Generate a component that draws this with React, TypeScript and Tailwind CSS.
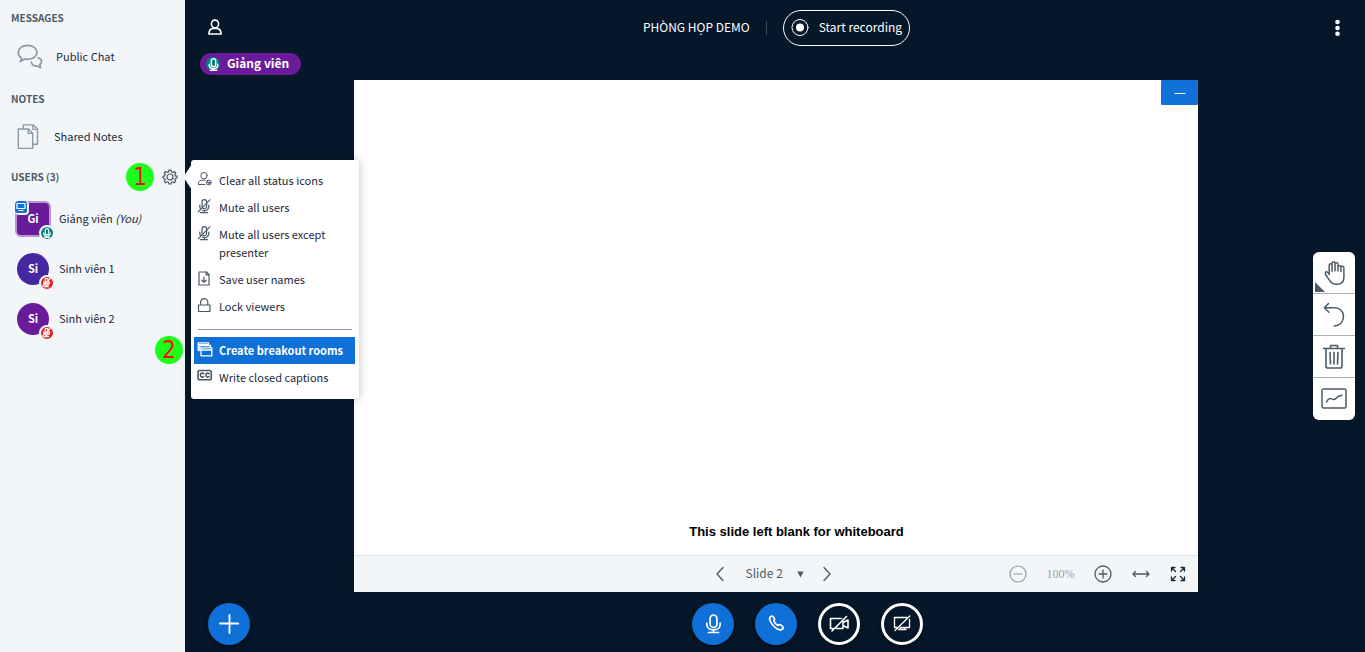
import type { ReactNode } from "react";

type IconProps = { className?: string };

function Svg({ w, h, sw = 1, className = "", children }: { w: number; h: number; sw?: number; className?: string; children: ReactNode }) {
  return (
    <svg
      aria-hidden="true"
      width={w}
      height={h}
      viewBox={`0 0 ${w} ${h}`}
      fill="none"
      stroke="currentColor"
      strokeWidth={sw}
      strokeLinecap="round"
      strokeLinejoin="round"
      className={`shrink-0 ${className}`}
    >
      {children}
    </svg>
  );
}

const ChatIcon = () => (
  <Svg w={26} h={26} sw={1.7}>
    <path d="M4.500 14.200C2.400 12.800 1.200 10.900 1.200 8.500 1.200 4.300 5.400 1.400 10.600 1.400S20 4.300 20 8.300s-4.200 7-9.400 7c-1 0-2-.1-2.900-.4L3.200 17.600z" />
    <path d="M21.200 13.700c2 .6 3.300 1.900 3.300 3.700 0 1.300-.7 2.300-1.700 3.100l.7 3.200-3-1.700c-3 .6-6.100-1.200-6.100-4" />
  </Svg>
);

const NotesIcon = () => (
  <Svg w={22} h={26} sw={1.4}>
    <path d="M1.300 5h10.200l4.200 4.200v15.200H1.300z" />
    <path d="M11.300 5.200v4.200h4.200" />
    <path d="M6.200 4.700V.9h10l4.300 4.200v15.200h-4.500" />
    <path d="M15.900 1.200v4.200h4.200" />
  </Svg>
);

const GearIcon = () => (
  <Svg w={16} h={16} sw={1.2}>
    <circle cx="8" cy="8" r="3" />
    <path d="M6.900 1.200h2.200l.4 1.800 1.200.5 1.600-1 1.500 1.500-1 1.600.5 1.300 1.700.3v1.800l-1.700.4-.5 1.300 1 1.500-1.500 1.600-1.600-1-1.200.5-.4 1.700H6.900l-.4-1.700-1.200-.5-1.600 1-1.500-1.600 1-1.500-.5-1.300L1 9V7.200l1.700-.3.5-1.300-1-1.600 1.500-1.500 1.600 1 1.200-.5z" />
  </Svg>
);

const ClearStatusIcon = () => (
  <Svg w={16} h={16}>
    <circle cx="7" cy="3.700" r="3.200" />
    <path d="M8 12.500H1.200c0-2.600 1.600-4.300 4-4.300h3" />
    <circle cx="11.800" cy="10.500" r="2.400" />
    <path d="M10.500 10.500l1 1 1.700-1.800M10.500 9.400l2.600 2.400" />
  </Svg>
);

const MutedMicIcon = ({ size = 16, sw = 1.2, className = "" }: { size?: number; sw?: number } & IconProps) => (
  <svg aria-hidden="true" width={size} height={size} viewBox="0 0 16 16" fill="none" stroke="currentColor" strokeWidth={sw} strokeLinecap="round" strokeLinejoin="round" className={`shrink-0 ${className}`}>
    <path d="M5 7.800V3a2.300 2.300 0 0 1 4.600 0V7.300a2.300 2.300 0 0 1-3.800 1.900" />
    <path d="M2.800 6.200v1.400c0 1 .3 1.800.9 2.400M5.600 11.200c3 1.100 6.200-.6 6.200-3.700V6.200M7.300 11.500v2M3.500 13.700h7M1.200 12.800L12.900.8" />
  </svg>
);

const MicIcon = ({ size = 16, sw = 1.2, className = "" }: { size?: number; sw?: number } & IconProps) => (
  <svg aria-hidden="true" width={size} height={size} viewBox="0 0 20 20" fill="none" stroke="currentColor" strokeWidth={sw} strokeLinecap="round" strokeLinejoin="round" className={`shrink-0 ${className}`}>
    <rect x="6.600" y="1.200" width="6.800" height="12.300" rx="3.400" />
    <path d="M3.500 9.500v1.200c0 3.400 2.900 5.600 6.500 5.600s6.500-2.200 6.500-5.600V9.500M10 16.300v2.600M5 18.900h10" />
  </svg>
);

const SaveIcon = () => (
  <Svg w={16} h={16} sw={1.2}>
    <path d="M2 1h7.500L12 3.700v10.300H2z" />
    <path d="M9.200 1.200v2.700H12M7 6v5.200M4.800 9.200L7 11.300l2.200-2.100" />
  </Svg>
);

const LockIcon = () => (
  <Svg w={16} h={16} sw={1.2}>
    <path d="M1.500 7h11.500v6.500H1.500zM3.600 6.800V4.300a3.600 3.600 0 0 1 7.200 0v2.500" />
  </Svg>
);

const RoomsIcon = () => (
  <Svg w={16} h={16} sw={1.3}>
    <path d="M1.200 8.500V.8H11.500v1.500M1.200 2.600h10" />
    <path d="M2.800 8.500V3.500h10.700v2" />
    <path d="M4 5.800h10.800v8H4zM4 8h10.800" />
  </Svg>
);

const CaptionsIcon = () => (
  <Svg w={16} h={16} sw={1.600}>
    <rect x="1" y="1.500" width="13.300" height="9.200" rx="1.800" />
    <path d="M6.700 4.700C5.200 3.400 3.400 4.400 3.400 6.100s1.800 2.700 3.300 1.400M12.200 4.700C10.700 3.400 8.900 4.400 8.900 6.100s1.800 2.700 3.300 1.400" />
  </Svg>
);

const badge = "absolute -right-[6px] -bottom-[6px] flex size-4 items-center justify-center rounded-full border-2 border-[#f3f6f9] text-white";

const users = [
  { name: "Giảng viên", you: true, initials: "Gi", avatar: "size-9 rounded-md border-2 border-[#ba93d2] bg-[#6a1b9a]", muted: false },
  { name: "Sinh viên 1", you: false, initials: "Si", avatar: "size-8 rounded-full bg-[#4527a0]", muted: true },
  { name: "Sinh viên 2", you: false, initials: "Si", avatar: "size-8 rounded-full bg-[#6a1b9a]", muted: true },
];

function Marker({ children, className }: { children: ReactNode; className: string }) {
  return (
    <span className={`absolute flex size-7 items-center justify-center rounded-full bg-[#1cff1c] font-['DejaVu_Sans_Condensed','DejaVu_Sans',sans-serif] text-2xl leading-7 text-[#ff0a0a] ${className}`}>
      {children}
    </span>
  );
}

function MenuItem({ icon, children, active = false }: { icon: ReactNode; children: ReactNode; active?: boolean }) {
  const tone = active ? "bg-[#0f70d7] font-bold text-white" : "text-[#1b2a3a]";
  return (
    <li>
      <button type="button" role="menuitem" className={`flex w-full items-start gap-[6px] pt-1 pr-1 pb-[5px] pl-[3px] text-left leading-[18px] ${tone}`}>
        <span className={`pt-px ${active ? "text-white" : "text-[#4e5a66]"}`}>{icon}</span>
        <span>{children}</span>
      </button>
    </li>
  );
}

function UserMenu() {
  return (
    <div className="absolute top-0 left-[191px] z-20 w-[168px] rounded-[3px] bg-white pt-[7px] pr-1 pb-2 pl-[3px] text-[11px] shadow-[0_0_10px_rgba(0,0,0,0.25)]">
      <svg aria-hidden="true" width="8" height="26" viewBox="0 0 8 26" className="absolute top-1 -left-[7px]">
        <path d="M8 0L1 10.500q-1.500 2.500 0 5L8 26z" fill="#fff" />
      </svg>
      <ul role="menu">
        <MenuItem icon={<ClearStatusIcon />}>Clear all status icons</MenuItem>
        <MenuItem icon={<MutedMicIcon />}>Mute all users</MenuItem>
        <MenuItem icon={<MutedMicIcon />}>Mute all users except presenter</MenuItem>
        <MenuItem icon={<SaveIcon />}>Save user names</MenuItem>
        <MenuItem icon={<LockIcon />}>Lock viewers</MenuItem>
        <li role="separator" className="mr-[3px] ml-1 mt-[9px] mb-[7px] h-px bg-[#8b9aa8]" />
        <MenuItem icon={<RoomsIcon />} active>Create breakout rooms</MenuItem>
        <MenuItem icon={<CaptionsIcon />}>Write closed captions</MenuItem>
      </ul>
      <Marker className="top-44 -left-9">2</Marker>
    </div>
  );
}

function Sidebar() {
  return (
    <aside className="w-[185px] shrink-0 bg-[#f3f6f9] text-[11px] text-[#1b2a3a]">
      <h2 className="flex h-9 items-center pb-0.5 pl-[11px] text-[10px] font-bold text-[#4e5a66]">MESSAGES</h2>
      <button type="button" className="flex h-[42px] w-full items-center gap-[13px] pl-[17px]">
        <span className="text-[#8b9aa8]"><ChatIcon /></span>
        <span className="pb-0.5">Public Chat</span>
      </button>
      <h2 className="flex h-[42px] items-center pb-0.5 pl-[11px] text-[10px] font-bold text-[#4e5a66]">NOTES</h2>
      <button type="button" className="flex h-[34px] w-full items-center gap-[15px] pl-[17px]">
        <span className="text-[#8b9aa8]"><NotesIcon /></span>
        <span className="pb-0.5">Shared Notes</span>
      </button>
      <div className="relative mt-1.5 flex h-[34px] w-[185px] items-center justify-between pr-[7px] pl-[11px]">
        <h2 className="pb-0.5 text-[10px] font-bold text-[#4e5a66]">USERS (3)</h2>
        <Marker className="top-[3px] left-[126px]">1</Marker>
        <button type="button" aria-label="Manage users" className="text-[#4e5a66]"><GearIcon /></button>
        <UserMenu />
      </div>
      <ul>
        {users.map((u) => (
          <li key={u.name} className="flex h-[50px] items-center gap-2 pl-[15px]">
            <div className="flex w-9 shrink-0 justify-center">
              <div className={`relative flex items-center justify-center text-[11px] font-bold text-white ${u.avatar}`}>
                <span className="pb-0.5">{u.initials}</span>
                {u.you && (
                  <span className="absolute -top-[2px] -left-[2px] flex size-[14px] items-center justify-center rounded-sm border-r-2 border-b-2 border-[#f3f6f9] bg-[#0f70d7]">
                    <Svg w={10} h={10} sw={1.2}>
                      <path d="M1 1.500h8v5H1zM3 8.500h4" />
                    </Svg>
                  </span>
                )}
                <span className={`${badge} ${u.muted ? "bg-[#df2721]" : "bg-[#008081]"}`}>
                  {u.muted ? <MutedMicIcon size={10} sw={2} /> : <MicIcon size={10} sw={2.400} />}
                </span>
              </div>
            </div>
            <span className="pb-0.5">
              {u.name} {u.you && <i>(You)</i>}
            </span>
          </li>
        ))}
      </ul>
    </aside>
  );
}

function TopBar() {
  return (
    <header className="grid h-[53px] grid-cols-[1fr_auto_1fr] items-center px-[23px] text-xs text-white">
      <button type="button" aria-label="Toggle user list" className="justify-self-start">
        <Svg w={16} h={16} sw={1.6}>
          <ellipse cx="7" cy="5" rx="3.600" ry="3.900" />
          <path d="M.9 15c0-3.200 1.600-5.200 4.100-5.500h4c2.500.3 4.100 2.300 4.100 5.500z" />
        </Svg>
      </button>
      <div className="flex items-center pt-[3px] pl-[3px]">
        <h1 className="pb-0.5">PHÒNG HỌP DEMO</h1>
        <span className="mx-4 h-[14px] w-px bg-[#3a4a59]" />
        <button type="button" className="flex h-9 items-center gap-[10px] rounded-full border border-white px-[7px]">
          <Svg w={18} h={18}>
            <circle cx="9" cy="8.500" r="8" />
            <circle cx="9" cy="8.500" r="4" fill="currentColor" stroke="none" />
          </Svg>
          <span className="pb-0.5">Start recording</span>
        </button>
      </div>
      <button type="button" aria-label="Options" className="justify-self-end">
        <svg aria-hidden="true" width="9" height="18" viewBox="0 0 9 18" fill="currentColor">
          <circle cx="4.500" cy="4" r="2.300" />
          <circle cx="4.500" cy="10" r="2.300" />
          <circle cx="4.500" cy="15.700" r="2.300" />
        </svg>
      </button>
    </header>
  );
}

function SlideControls() {
  return (
    <div className="grid h-[37px] grid-cols-[1fr_auto_1fr] items-center border-t border-[#dfe4e9] bg-[#f3f6f9] text-[#4e5a66]">
      <span />
      <div className="flex items-center pr-[6px]">
        <button type="button" aria-label="Previous slide">
          <Svg w={10} h={16} sw={1.300}><path d="M8 1.500L2 8l6 6.500" /></Svg>
        </button>
        <div className="relative mx-[18px] flex items-center">
          <select aria-label="Choose slide" className="w-[61px] appearance-none bg-transparent pb-0.5 pl-[3px] text-xs leading-5">
            <option>Slide 2</option>
          </select>
          <svg aria-hidden="true" width="7" height="7" viewBox="0 0 7 7" className="pointer-events-none absolute right-0">
            <path d="M.3.500h6.400L3.500 6.500z" fill="currentColor" />
          </svg>
        </div>
        <button type="button" aria-label="Next slide">
          <Svg w={10} h={16} sw={1.300}><path d="M2 1.500L8 8l-6 6.500" /></Svg>
        </button>
      </div>
      <div className="flex items-center justify-end pr-3">
        <button type="button" aria-label="Zoom out" className="text-[#8b9aa8]">
          <Svg w={18} h={18} sw={1.2}><circle cx="9" cy="9" r="8" /><path d="M5 9h8" /></Svg>
        </button>
        <span className="w-[67px] text-center font-['Liberation_Serif',serif] text-xs text-[#9aa0a8]">100%</span>
        <button type="button" aria-label="Zoom in">
          <Svg w={18} h={18} sw={1.3}><circle cx="9" cy="9" r="8" /><path d="M5 9h8M9 5v8" /></Svg>
        </button>
        <button type="button" aria-label="Fit to width" className="mx-5">
          <Svg w={18} h={10} sw={1.300}><path d="M1 5h16M3.500 2.500L1 5l2.500 2.500M14.500 2.500L17 5l-2.500 2.500" /></Svg>
        </button>
        <button type="button" aria-label="Fullscreen" className="text-[#1b2a3a]">
          <Svg w={16} h={16} sw={1.300}>
            <path d="M1.500 5V1.500H5M1.500 1.500l4 4M11 1.500h3.500V5M14.500 1.500l-4 4M1.500 11v3.500H5M1.500 14.500l4-4M11 14.500h3.500V11M14.500 14.500l-4-4" />
          </Svg>
        </button>
      </div>
    </div>
  );
}

const toolClass = "flex h-[42px] w-[42px] items-center justify-center";

function Tools() {
  return (
    <div className="mr-[10px] flex flex-col divide-y divide-[#a7b3bd] self-center justify-self-end overflow-hidden rounded-md bg-white text-[#4e5a66]">
      <button type="button" aria-label="Pan" className={`relative ${toolClass}`}>
        <Svg w={24} h={26} sw={1.5}>
          <path d="M7.200 14.500V5.300c0-2 2.800-2 2.800 0v-2c0-2.100 3-2.100 3 0v2-1c0-2.100 3-2.100 3 0v3c0-2.100 3-2.100 3 0v0c0-1.400 2.900-1.600 2.900.5v9.700c0 4.200-2.700 6.800-7.200 6.800-3.800 0-5.800-1-7.400-4.400L3.800 15c-.9-1.800-.4-3 .5-3.200 1.100-.2 1.900.8 2.900 2.700zM10 5.300v6M13 5.300v5.500M16 6v5M19 7.500v4" />
        </Svg>
        <svg aria-hidden="true" width="10" height="10" viewBox="0 0 10 10" className="absolute bottom-[1px] left-[2px]">
          <path d="M0 0v10h10z" fill="currentColor" />
        </svg>
      </button>
      <button type="button" aria-label="Undo" className={toolClass}>
        <Svg w={24} h={26} sw={1.5}>
          <path d="M2.500 5.800h10.200c5.200 0 8.800 3.800 8.800 8.800 0 5.400-3.800 9.300-9.300 9.300M6.500 1.500L2.300 5.800l4.700 4.500" />
        </Svg>
      </button>
      <button type="button" aria-label="Clear" className={toolClass}>
        <Svg w={24} h={26} sw={1.600}>
          <path d="M1.500 4.500h21M8.500 4.200V1.500h7v2.700M4 5v17.200c0 1.200.6 1.800 1.800 1.800h12.400c1.200 0 1.800-.6 1.800-1.800V5M8 8.500l.5 11.500M12 8.500V20M16 8.500L15.500 20" />
        </Svg>
      </button>
      <button type="button" aria-label="Multi-user whiteboard" className={toolClass}>
        <Svg w={26} h={22} sw={1.500}>
          <rect x="1" y="1" width="24" height="19" rx="1.500" />
          <path d="M5.500 14c1.500-3 3.500-4.500 5.500-3 2.500 1.800 4-.5 5.500-2 1-1 2.500-1.300 4.500-1.700" />
        </Svg>
      </button>
    </div>
  );
}

const round = "flex size-[42px] items-center justify-center rounded-full text-white shadow-[0_2px_5px_rgba(0,0,0,0.5)]";

function ActionsBar() {
  return (
    <footer className="flex h-[60px] items-center pt-1 pl-[23px]">
      <button type="button" aria-label="Actions" className={`${round} bg-[#0f70d7]`}>
        <Svg w={20} h={20} sw={1.8}><path d="M10.500 1v18M1 9.500h18.500" /></Svg>
      </button>
      <div className="flex flex-1 justify-center gap-[21px]">
        <button type="button" aria-label="Mute" className={`${round} bg-[#0f70d7]`}>
          <Svg w={20} h={20} sw={1.700}>
            <rect x="7.100" y="1" width="6.800" height="12.300" rx="3.400" />
            <path d="M3.800 9.200v1.200c0 3.400 2.900 5.400 6.700 5.400s6.700-2 6.700-5.400V9.200M10.500 15.800v2.600M5.500 18.500h10" />
          </Svg>
        </button>
        <button type="button" aria-label="Leave audio" className={`${round} bg-[#0f70d7]`}>
          <Svg w={18} h={18} sw={1.700}>
            <path d="M3.300 1.800C4.400.7 5.600.8 6.400 2l1 1.700c.5.900.2 1.600-.6 2.300.6 1.700 2.300 3.400 4.100 4.400.8-.8 1.600-1.100 2.500-.6l1.900 1.300c1.100.8 1.200 1.900.3 2.800-1.200 1.200-3.100 1.200-5.300 0C7.700 12.500 4.800 9.400 3.200 6 2.400 4.300 2.400 2.700 3.300 1.800z" />
          </Svg>
        </button>
        <button type="button" aria-label="Share webcam" className={`${round} border-[3px] border-white`}>
          <Svg w={20} h={18} sw={1.600}>
            <path d="M12.500 3.500H1.500v10h2.500M7.500 13.500H14V5M14 7.500L19 5v8L14 10.500M3 16L17.500 1.500" />
          </Svg>
        </button>
        <button type="button" aria-label="Share screen" className={`${round} border-[3px] border-white`}>
          <Svg w={18} h={18} sw={1.300}>
            <path d="M14 2.500H1.500v10H4M7.500 12.500h9V4.500M5.500 14.500h7.500M7 12.800v1.500M11.500 12.800v1.500M2 15.500L16.800 1" />
          </Svg>
        </button>
      </div>
    </footer>
  );
}

export default function App() {
  return (
    <div className="flex min-h-screen bg-[#06172a] font-['Noto_Sans_CJK_SC',sans-serif]">
      <Sidebar />
      <main className="flex min-w-0 flex-1 flex-col">
        <TopBar />
        <div className="mb-[5px] flex h-[22px] pl-[15px]">
          <span className="flex items-center gap-[7px] rounded-full bg-[#6a1b9a] pr-3 pl-[6px] text-xs font-bold text-white">
            <span className="flex size-[14px] items-center justify-center rounded-full bg-[#008081]">
              <MicIcon size={13} sw={2.200} />
            </span>
            <span className="pb-0.5">Giảng viên</span>
          </span>
        </div>
        <div className="grid flex-1 grid-cols-[169px_1fr_167px]">
          <section className="col-start-2 flex flex-col bg-white">
            <div className="flex flex-1 flex-col justify-between">
              <button type="button" aria-label="Minimize presentation" className="flex h-[25px] w-[37px] items-center justify-center self-end rounded-[1px] bg-[#0f70d7] text-white">
                <Svg w={12} h={5}><path d="M1 3.500h10" /></Svg>
              </button>
              <p className="mb-[13px] pl-[41px] text-center font-['Liberation_Sans',sans-serif] text-[13px] leading-5 font-bold text-black">
                This slide left blank for whiteboard
              </p>
            </div>
            <SlideControls />
          </section>
          <Tools />
        </div>
        <ActionsBar />
      </main>
    </div>
  );
}
